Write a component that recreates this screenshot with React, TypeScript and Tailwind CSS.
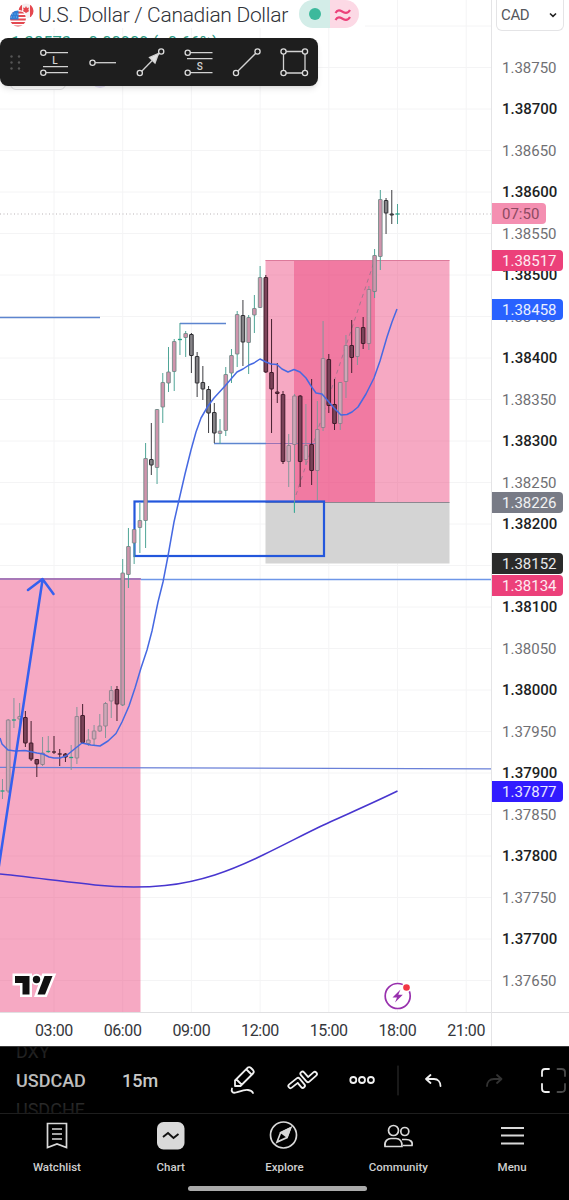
import React from 'react'

type Candle = [number, number, number, number, boolean]

// [high, bodyTop, bodyBottom, low, up], oldest bar first
const candles: Candle[] = [
  [779, 790.5, 791.5, 799, true],
  [719, 719.5, 791.5, 793, true],
  [698, 719.5, 720.5, 728, true],
  [703, 716, 719.5, 726, true],
  [711, 717, 743.5, 747, false],
  [721, 742.5, 759.5, 761, false],
  [759, 759, 764.5, 777, false],
  [737, 752.5, 765, 766, true],
  [736, 751, 752, 753, true],
  [736, 751.5, 753, 754, false],
  [749, 753.5, 754.5, 766, false],
  [753, 753.5, 757.5, 762, false],
  [745, 757, 758, 770, true],
  [707, 716, 758.5, 764, true],
  [704, 715, 743, 743, false],
  [729, 739.5, 744, 746, true],
  [725, 730.5, 739.5, 746, true],
  [714, 725.5, 731.5, 732, true],
  [702, 703, 726.5, 738, true],
  [686, 690, 701.5, 718, true],
  [686, 689, 704.5, 721, false],
  [559, 572.5, 705.5, 706, true],
  [528, 546, 575, 588, true],
  [529, 529, 543.5, 564, true],
  [503, 520, 528, 553, true],
  [443, 458, 521, 548, true],
  [423, 459, 465.5, 475, false],
  [409, 409, 468, 484, true],
  [373, 382, 407.5, 423, true],
  [347, 371.5, 383.5, 392, true],
  [339, 341, 372, 391, true],
  [323, 339, 340, 355, true],
  [331, 333, 338, 357, true],
  [333, 334, 356, 373, false],
  [352, 356, 383.5, 397, false],
  [366, 382, 389.5, 400, false],
  [386, 389, 413.5, 433, false],
  [403, 412, 433.5, 443, false],
  [419, 430.5, 434, 444, true],
  [367, 374, 431, 436, true],
  [349, 355, 373.5, 383, true],
  [311, 314, 354.5, 367, true],
  [300, 315, 342.5, 366, false],
  [315, 317, 343, 374, true],
  [295, 308, 315.5, 333, true],
  [266, 277, 308, 308, true],
  [275, 277, 372.5, 373, false],
  [319, 372, 389.5, 433, false],
  [363, 391.5, 394, 403, false],
  [391, 394, 462, 464, false],
  [434, 445, 462, 487, true],
  [394, 395.5, 445, 513, true],
  [395, 395.5, 462, 487, false],
  [404, 445, 460, 465, true],
  [379, 444, 471, 485, false],
  [401, 429, 471, 500, true],
  [321, 358, 428, 431, true],
  [354, 359, 406, 413, false],
  [379, 404, 424, 430, false],
  [382, 382, 424, 430, true],
  [335, 345, 382, 398, true],
  [320, 345, 358, 373, false],
  [327, 327, 357, 365, true],
  [317, 327, 344, 349, false],
  [286, 289, 344, 350, true],
  [249, 255, 292, 298, true],
  [190, 199, 257, 270, true],
  [198, 200, 213.5, 234, false],
  [190, 213.5, 215.5, 224, false],
  [204, 213.5, 214.5, 224, true],
]

const hours = ['03:00', '06:00', '09:00', '12:00', '15:00', '18:00', '21:00']
const hourX = [54, 122.7, 191.4, 260.1, 328.8, 397.5, 466.2]
const prices = Array.from({ length: 23 }, (_, i) => (1.3875 - i * 0.0005).toFixed(5))

const tags = [
  { text: '1.38517', cls: 'top-[250px] bg-[#ec407a]' },
  { text: '1.38458', cls: 'top-[299px] bg-[#2962ff]' },
  { text: '1.38226', cls: 'top-[492px] bg-[#787b86]' },
  { text: '1.38152', cls: 'top-[553px] bg-[#2a2a2a]' },
  { text: '1.38134', cls: 'top-[575px] bg-[#ec407a]' },
  { text: '1.37877', cls: 'top-[781px] bg-[#311bff]' },
]

const MA_FAST =
  '0,738 2,744 8,750 15,751 25,750.5 37,753 43,754 49,757 54,758 60,758 66,756 72,751 82,743 91,745 100,746 108,741 116,733.5 122,722 129,706 135,688 141,668 147,650 152,631 158,602 163,582 168,556 174,522 179,500 185,474 191,450 196,432 201,418 208,406 214,398 225,386 231,379 237,372 243,369 249,365 254,363 260,359 266,362 271,364 277,364.5 282,369 288,372 294,369.5 300,372 306,378 311,386 316,393 322,394 328,401 334,408 341,415 347,414.5 352,412 358,407 366,394 374,378 380,361 387,337 392,322 397,309'

const CandleBar = ({ c, i }: { c: Candle; i: number }) => {
  const [high, top, bottom, low, up] = c
  const x = 397.5 - (candles.length - 1 - i) * 5.725
  const inZone = (x < 141 && top > 578) || (x > 265 && top > 257)
  const line = up ? (inZone ? '#83969a' : '#4fa597') : inZone ? '#46202f' : '#3c3c40'
  const edge = up ? (inZone ? '#827e86' : '#678580') : inZone ? '#401a2a' : '#2c2c30'
  const fill = up ? (inZone ? '#cfa6b7' : '#cf94ac') : inZone ? '#7b4359' : '#858387'
  if (bottom - top < 1.6) {
    return (
      <g>
        <path d={`M${x} ${high}V${low}`} stroke={line} strokeWidth="1" />
        <path d={`M${x - 2} ${top + 0.5}h4`} stroke={up ? '#25a184' : edge} strokeWidth="1.3" />
      </g>
    )
  }
  return (
    <g>
      <path d={`M${x} ${high}V${low}`} stroke={line} strokeWidth="1" />
      <rect x={x - 1.8} y={top + 0.5} width="3.6" height={bottom - top - 1} fill={fill} stroke={edge} strokeWidth={up ? 0.8 : 1} rx="0.3" />
    </g>
  )
}

const ChartCanvas = () => (
  <svg className="block h-[1012px] w-[491px]" viewBox="0 0 491 1012" fill="none">
    {hourX.map((x) => (
      <path key={x} d={`M${x} 0V1012`} stroke="#f4f4f5" />
    ))}
    {Array.from({ length: 24 }, (_, i) => (
      <path key={i} d={`M0 ${26 + i * 41.5}H491`} stroke="#f4f4f5" />
    ))}

    {/* drawn zones */}
    <rect y="578" width="140.5" height="434" fill="#ec407a" fillOpacity="0.45" />
    <rect x="265.5" y="260" width="184" height="242" fill="#ec407a" fillOpacity="0.45" />
    <rect x="294" y="260" width="81" height="242" fill="#ec407a" fillOpacity="0.45" />
    <rect x="265.5" y="502" width="184" height="61.5" fill="#d4d4d4" />
    <path d="M265.5 260.5H449.5" stroke="#dc7a9b" strokeWidth="1" />
    <path d="M265.5 502.5H449.5" stroke="#8d8790" strokeWidth="1" />
    <path d="M296 495L375 259" stroke="#a8758f" strokeDasharray="4 4" />

    {/* levels */}
    <path d="M0 317.5H100M180 323.5H226" stroke="#5d85cf" strokeWidth="1.3" />
    <path d="M214 443.5H266" stroke="#5d85cf" strokeWidth="1.3" />
    <path d="M266 443.5H318" stroke="#9a72b4" strokeWidth="1.2" />
    <path d="M0 579H141" stroke="#8c68b5" strokeWidth="1.6" />
    <path d="M141 579.5H491" stroke="#6e96e8" strokeWidth="1.3" />
    <path d="M0 767.3L491 768.8" stroke="#6a80d8" strokeWidth="1.2" />
    <path d="M0 214H491" stroke="#b9b3b6" strokeDasharray="1 2.5" />

    <rect x="134.5" y="501.5" width="189.5" height="54.5" stroke="#2357dc" strokeWidth="2.2" />
    {candles.map((c, i) => (
      <CandleBar key={i} c={c} i={i} />
    ))}
    <path d="M294.4 502V512.5" stroke="#2fb39a" />

    <polyline points={MA_FAST} stroke="#4669e2" strokeWidth="1.5" strokeLinejoin="round" />
    <path
      d="M0 874C30 877 60 881 95 885C120 887.500 145 887.500 165 885.500C200 882 230 871 263 855C290 842 310 831 330 822C352 812 375 802 397.500 791"
      stroke="#4836cf"
      strokeWidth="1.6"
    />
    <path d="M-2 872L42.500 580M28 590L42.500 579L53.500 594" stroke="#3560ef" strokeWidth="2.5" strokeLinecap="round" strokeLinejoin="round" />

    {/* logo */}
    <g stroke="#fff" strokeWidth="5" strokeLinejoin="miter" fill="#fff">
      <path d="M15 976H29.500V994.500H22.500V983H15Z" />
      <circle cx="36.500" cy="979.500" r="3.200" />
      <path d="M44 976H52.500L45 994.500H37.500Z" />
    </g>
    <g fill="#111">
      <path d="M15 976H29.500V994.500H22.500V983H15Z" />
      <circle cx="36.500" cy="979.500" r="3.700" />
      <path d="M44.500 976H52.500L45 994.500H37.500Z" />
    </g>

    {/* event marker */}
    <circle cx="397.700" cy="996" r="12.500" stroke="#9830ad" strokeWidth="1.700" fill="#fff" />
    <path d="M400.500 989.500L392.500 997.500H397L395 1002.500L402.800 994.800H398.300Z" fill="#9830ad" />
    <circle cx="406.500" cy="987.500" r="4.800" fill="#fff" />
    <circle cx="406.500" cy="987.500" r="3.300" fill="#f23645" />
  </svg>
)

const Flags = () => (
  <svg className="h-7 w-6 shrink-0" viewBox="0 0 24 28" fill="none">
    <clipPath id="ca">
      <circle cx="16" cy="11" r="7.500" />
    </clipPath>
    <clipPath id="us">
      <circle cx="8" cy="18.500" r="8" />
    </clipPath>
    <g clipPath="url(#ca)">
      <path d="M8 3H24V19H8Z" fill="#f5eff0" />
      <path d="M8 3H12V19H8ZM20 3H24V19H20Z" fill="#e5484f" />
      <path d="M16 6l1 2 2-.5-.7 2.500 1 1-3.300 2-3.300-2 1-1-.7-2.500 2 .5Z" fill="#e5484f" />
    </g>
    <circle cx="8" cy="18.500" r="8.800" fill="#fff" />
    <g clipPath="url(#us)">
      <path d="M0 12.500H16M0 16H16M0 19.500H16M0 23H16M0 26.500H16" stroke="#e34850" strokeWidth="1.800" />
      <path d="M0 10H8.500V19.500H0Z" fill="#2f7fd6" />
      <path d="M2 14H8M1 17H8" stroke="#9cc5f0" strokeWidth=".8" strokeDasharray="1 1.500" />
    </g>
  </svg>
)

const Node = ({ x, y }: { x: number; y: number }) => <circle cx={x} cy={y} r="2.600" fill="#1e1e1e" stroke="#dcdcdc" strokeWidth="1.300" />

const DrawingToolbar = () => (
  <div className="absolute top-[38px] left-0 flex h-12 w-[318px] items-center rounded-lg bg-[#1e1e1e] shadow-md">
    <svg className="h-12 w-[318px]" viewBox="0 0 318 48" fill="none" stroke="#d2d2d2" strokeWidth="1.300">
      <g fill="#555" stroke="none">
        {[18.5, 24.5, 30.5].map((y) => (
          <g key={y}>
            <circle cx="11.500" cy={y} r="1.200" />
            <circle cx="19" cy={y} r="1.200" />
          </g>
        ))}
      </g>
      <path d="M43 14.700H68M43 28.700H68M43 34.700H68" />
      <Node x={43.300} y={14.700} />
      <Node x={43.300} y={34.700} />
      <text x="55" y="25.500" textAnchor="middle" className="fill-[#d2d2d2] stroke-none font-[Roboto] text-[10px] font-medium">L</text>
      <path d="M92 24.700H116" />
      <Node x={92.500} y={24.700} />
      <path d="M140 35L161 13.500" />
      <path d="M158.500 15.500L155 25L149.500 19.500Z" fill="#e2e2e2" />
      <Node x={139.800} y={35} />
      <Node x={161.200} y={13.500} />
      <path d="M187 14.700H212.500M187 20.700H212.500M187 34.700H212.500" />
      <Node x={187.700} y={14.700} />
      <Node x={187.700} y={34.700} />
      <text x="199.700" y="31.500" textAnchor="middle" className="fill-[#d2d2d2] stroke-none font-[Roboto] text-[10px] font-medium">S</text>
      <path d="M236 35L257.500 13.500" />
      <Node x={236} y={35} />
      <Node x={257.500} y={13.500} />
      <path d="M283.500 13.500H305V35H283.500Z" />
      <Node x={283.500} y={13.500} />
      <Node x={305} y={13.500} />
      <Node x={283.500} y={35} />
      <Node x={305} y={35} />
    </svg>
  </div>
)

const PriceAxis = () => (
  <div className="relative h-[1046px] w-[78px] border-l border-[#e4e4e6] bg-white text-[15px] text-[#707074]">
    <div className="ml-1 flex h-[31px] w-[68px] items-center justify-between rounded-b-md border border-t-0 border-[#e4e4e6] pr-1 pl-1 text-[15px] text-[#55575c]">
      <span className="tracking-tight">CAD</span>
      <svg className="h-3 w-3" viewBox="0 0 12 12" fill="none" stroke="#222" strokeWidth="1.600">
        <path d="M3 4.500L6 7.300L9 4.500" />
      </svg>
    </div>
    <div className="flex flex-col pt-4">
      {prices.map((p) => (
        <div key={p} className={p.endsWith('00') ? 'flex h-[41.5px] items-center pl-2.5 font-medium text-[#1d1f24]' : 'flex h-[41.5px] items-center pl-2.5'}>
          {p}
        </div>
      ))}
    </div>
    <div className="absolute top-[203px] left-0 flex h-[21px] w-[54px] items-center rounded-r-sm bg-[#f48fb1] pt-0.5 pl-2.5 text-[#8c4a62]">07:50</div>
    {tags.map((t) => (
      <div key={t.text} className={'absolute left-0 flex h-[21px] w-[71px] items-center rounded-r-sm pt-0.5 pl-2.5 text-white/90 ' + t.cls}>
        {t.text}
      </div>
    ))}
    <div className="absolute top-[1012px] left-0 h-px w-full bg-[#e0e0e2]"></div>
  </div>
)

const BottomTools = () => (
  <div className="relative h-[67px] overflow-hidden border-t border-[#3a3a3a] bg-black">
    <div className="flex h-full items-center">
      <div className="flex w-[122px] flex-col pl-4 text-[18px] leading-[29px] text-[#c9c9c9]">
        <span className="text-[#484848]">DXY</span>
        <span className="font-medium">USDCAD</span>
        <span className="text-[#505050]">USDCHF</span>
      </div>
      <span className="text-[18px] font-medium text-[#c9c9c9]">15m</span>
    </div>
    <div className="absolute top-0 left-0 h-[67px] w-[110px] bg-linear-to-b from-black/70 via-transparent to-black/70"></div>
    <svg className="absolute top-0 left-[220px] h-[67px] w-[349px]" viewBox="220 1047 349 67" fill="none" stroke="#f0f0f0" strokeWidth="1.800" strokeLinejoin="round" strokeLinecap="round">
      <path d="M235 1086V1080.500L247.500 1067.800Q249.300 1066.300 251 1068L253 1070Q254.600 1071.700 253 1073.500L240.500 1086ZM236.500 1079.500L241.500 1084.500M246.500 1069.500L251.500 1074.500" />
      <path d="M232 1088.500C231 1091 232.500 1093.500 236 1092.500C241 1091 244 1089.500 248 1090Q252 1090.500 253 1093" />
      {/* two hollow chevrons: wide stroke with a black core */}
      <path d="M290.500 1086L298 1080L302.800 1085.700M302.500 1073.700L308 1080L314.800 1074" strokeWidth="6" />
      <path d="M290.500 1086L298 1080L302.800 1085.700M302.500 1073.700L308 1080L314.800 1074" stroke="#000" strokeWidth="2.400" />
      <circle cx="353.300" cy="1080" r="3" />
      <circle cx="362" cy="1080" r="3" />
      <circle cx="370.900" cy="1080" r="3" />
      <path d="M398 1066V1095" stroke="#333" strokeWidth="1" />
      <path d="M430.500 1075L426 1079L430.500 1083M426.500 1079H434C438 1079 440.500 1082 440.500 1086" />
      <path d="M497 1075L501.500 1079L497 1083M501 1079H494C489.500 1079 487 1082 487 1086" stroke="#333" />
      <path d="M549 1069H545Q542 1069 542 1072V1076M542 1084V1088.500Q542 1092 545 1092H549" />
      <path d="M557.500 1069H561.500Q565 1069 565 1072V1076M565 1084V1088.500Q565 1092 561.500 1092H557.500" stroke="#4a4a4a" />
    </svg>
  </div>
)

const tabIcons = {
  Watchlist: (
    <g>
      <path d="M6.500 3.500H25.500V27.500L16 24L6.500 27.500Z" />
      <path d="M11 9H21M11 14H21M11 19H21" />
    </g>
  ),
  Chart: (
    <g>
      <rect x="2" y="2" width="27.500" height="27.500" rx="6.500" fill="#d9d9d9" stroke="none" />
      <path d="M8 17L13 13L18.500 18L23.500 14" stroke="#111" strokeWidth="1.900" />
    </g>
  ),
  Explore: (
    <g>
      <circle cx="15.500" cy="15" r="13" />
      <path d="M22.500 8L19 17L13 12.500Z" fill="#d9d9d9" />
      <path d="M22.500 8L12.500 13L9 22L19 17.500Z" />
    </g>
  ),
  Community: (
    <g>
      <circle cx="11.500" cy="10.500" r="5" />
      <circle cx="22.800" cy="11.500" r="4" />
      <path d="M3 26.500C2 21 6 18.500 9 18.500H14C17.500 18.500 20.500 21 20 26.500ZM20 19.500H24C28 19.500 31 21.500 30 25.500H21" />
    </g>
  ),
  Menu: <path d="M5 8H28M5 15.500H28M5 23.500H28" strokeWidth="2.200" />,
}

const TabBar = () => (
  <div className="h-[87px] border-t border-[#1e1e1e] bg-black">
    <div className="grid grid-cols-5">
      {Object.entries(tabIcons).map(([name, icon]) => (
        <div key={name} className="flex flex-col items-center pt-[6px] text-[11.5px] leading-4 font-medium text-[#cfcfcf]">
          <svg className="h-8 w-8" viewBox="0 0 32 32" fill="none" stroke="#d9d9d9" strokeWidth="1.700">
            {icon}
          </svg>
          <span className="mt-[7px]">{name}</span>
        </div>
      ))}
    </div>
    <div className="mt-[11px] ml-[188px] h-[5px] w-[179px] rounded-full bg-[#aaa]"></div>
  </div>
)

const App = () => {
  return (
    <div className="h-[1200px] w-[569px] overflow-hidden bg-white font-[Roboto,sans-serif]">
      <div className="flex h-[1046px]">
        <div className="relative w-[491px]">
          <ChartCanvas />
          <div className="flex h-[34px] items-center border-t border-[#e0e0e2] pt-0.5 pl-[19.6px] text-[16px] text-[#35373c]">
            {hours.map((h) => (
              <span key={h} className="w-[68.7px] shrink-0 text-center tracking-tight">{h}</span>
            ))}
          </div>

          <div className="absolute top-0 left-0 flex h-7 w-[365px] items-center bg-white pl-[10px]">
            <Flags />
            <span className="ml-1 w-[252px] pt-0.5 text-[21px] leading-7 font-light tracking-[-0.3px] whitespace-nowrap text-[#303238]">U.S. Dollar / Canadian Dollar</span>
            <div className="ml-[9px] flex h-7 w-[60px] shrink-0 overflow-hidden rounded-full">
              <div className="flex w-[31px] items-center justify-center bg-[#d3ede8]">
                <div className="h-3 w-3 rounded-full bg-[#3cb99c]"></div>
              </div>
              <svg className="h-7 w-[29px] bg-[#fcd9e5]" viewBox="0 0 29 28" fill="none" stroke="#ec407a" strokeWidth="2.200">
                <path d="M5.500 13C8 8.500 11 11 13 12S18 13.500 20 10M5.500 20C8 15.500 11 18 13 19S18 20.500 20 17" />
              </svg>
            </div>
          </div>
          <div className="absolute top-[33px] left-[11px] text-[16.5px] leading-5 whitespace-pre text-[#2c9c85]">1.38573  +0.00909 (+0.66%)</div>
          <div className="absolute top-[72px] left-[10px] h-[18px] w-14 rounded-md border border-[#e0e0e2] bg-white"></div>
          <div className="absolute top-[68px] left-[90px] h-5 w-5 rounded-full bg-[#e4dff5]"></div>
          <DrawingToolbar />
        </div>
        <PriceAxis />
      </div>
      <BottomTools />
      <TabBar />
    </div>
  )
}

export default App
